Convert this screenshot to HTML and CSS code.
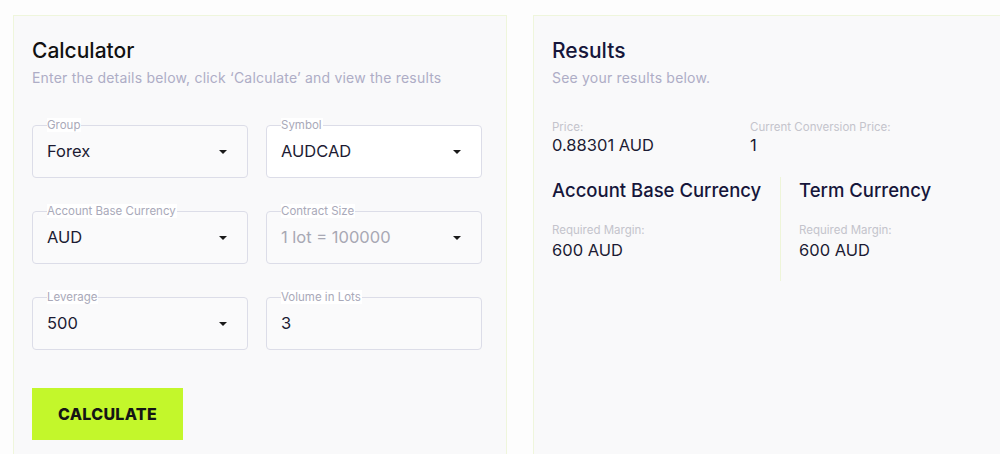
FILE: index.html
```html
<!DOCTYPE html>
<html>
<head>
<meta charset="utf-8">
<link rel="stylesheet" href="styles.css">
</head>
<body>
<div class="page">
  <section class="card calc">
    <h1 class="title">Calculator</h1>
    <p class="subtitle">Enter the details below, click ‘Calculate’ and view the results</p>
    <div class="fields">
      <div class="field"><span class="label">Group</span><span class="value">Forex</span><span class="caret"></span></div>
      <div class="field white"><span class="label">Symbol</span><span class="value">AUDCAD</span><span class="caret"></span></div>
      <div class="field"><span class="label">Account Base Currency</span><span class="value">AUD</span><span class="caret"></span></div>
      <div class="field disabled"><span class="label">Contract Size</span><span class="value">1 lot = 100000</span><span class="caret"></span></div>
      <div class="field"><span class="label">Leverage</span><span class="value">500</span><span class="caret"></span></div>
      <div class="field"><span class="label">Volume in Lots</span><span class="value">3</span></div>
    </div>
    <button class="btn">CALCULATE</button>
  </section>
  <section class="card results">
    <h1 class="title navy">Results</h1>
    <p class="subtitle">See your results below.</p>
    <div class="stats">
      <div class="stat"><div class="slabel">Price:</div><div class="svalue">0.88301 AUD</div></div>
      <div class="stat"><div class="slabel">Current Conversion Price:</div><div class="svalue">1</div></div>
    </div>
    <div class="currencies">
      <div class="cur base">
        <h2 class="curtitle">Account Base Currency</h2>
        <div class="slabel">Required Margin:</div>
        <div class="svalue margin">600 AUD</div>
      </div>
      <div class="cur term">
        <h2 class="curtitle">Term Currency</h2>
        <div class="slabel">Required Margin:</div>
        <div class="svalue margin">600 AUD</div>
      </div>
    </div>
  </section>
</div>
</body>
</html>
```
FILE: styles.css
```css
html, body {
  margin: 0;
  padding: 0;
  background: #fdfdfd;
  overflow: hidden;
  font-family: Inter, "Open Sans", sans-serif;
}
.page {
  display: flex;
  gap: 26px;
  padding: 15px 0 0 13px;
  width: 1100px;
}
.card {
  box-sizing: border-box;
  width: 494px;
  height: 470px;
  background: #f9f9fa;
  border: 1px solid #eff6dc;
  padding: 22px 18px;
}
.title {
  margin: 0;
  font-size: 21px;
  font-weight: 500;
  line-height: 26px;
  color: #111;
  letter-spacing: 0;
}
.title.navy { color: #16163a; }
.subtitle {
  margin: 5px 0 0;
  font-size: 14px;
  line-height: 18px;
  color: #aeadc6;
  letter-spacing: 0.2px;
}
.fields {
  display: grid;
  grid-template-columns: 216px 216px;
  column-gap: 18px;
  row-gap: 33px;
  margin-top: 38px;
}
.field {
  position: relative;
  box-sizing: border-box;
  height: 53px;
  border: 1px solid #dcdde8;
  border-radius: 4px;
  background: #fafafb;
  display: flex;
  align-items: center;
  padding: 0 14px;
}
.field.white { background: #fff; }
.label {
  position: absolute;
  top: -8px;
  left: 14px;
  font-size: 11.5px;
  line-height: 14px;
  color: #a9a9b9;
  background: #fff;
  padding: 0 1px 0 0;
  letter-spacing: 0;
}
.value {
  font-size: 16.5px;
  color: #1c1b33;
  flex: 1;
  margin-top: -1px;
  letter-spacing: 0;
}
.disabled .value { color: #a8a8b4; }
.caret {
  width: 0;
  height: 0;
  border-left: 4px solid transparent;
  border-right: 4px solid transparent;
  border-top: 4px solid #1a1a1a;
  margin-right: 6px;
}
.btn {
  display: block;
  margin-top: 38px;
  width: 151px;
  height: 52px;
  border: 0;
  border-radius: 0;
  background: #c3f72b;
  font-family: Inter, sans-serif;
  font-weight: 800;
  font-size: 16px;
  color: #151515;
  letter-spacing: 0.3px;
  padding: 0;
}
.stats {
  display: grid;
  grid-template-columns: 198px 198px;
  margin-top: 33px;
}
.slabel {
  font-size: 11.5px;
  line-height: 14px;
  color: #c4c4cc;
  letter-spacing: 0;
}
.svalue {
  font-size: 16.5px;
  line-height: 20px;
  color: #1c1b33;
  letter-spacing: 0;
  margin-top: 1px;
}
.svalue.margin { margin-top: 3px; }
.currencies {
  display: flex;
  margin-top: 22px;
}
.cur {
  height: 104px;
}
.cur.base {
  width: 228px;
  border-right: 1px solid #eef5d8;
}
.cur.term {
  padding-left: 18px;
}
.curtitle {
  margin: 0 0 20px;
  font-size: 18.5px;
  font-weight: 500;
  line-height: 26px;
  color: #16163a;
  letter-spacing: 0;
}
```
